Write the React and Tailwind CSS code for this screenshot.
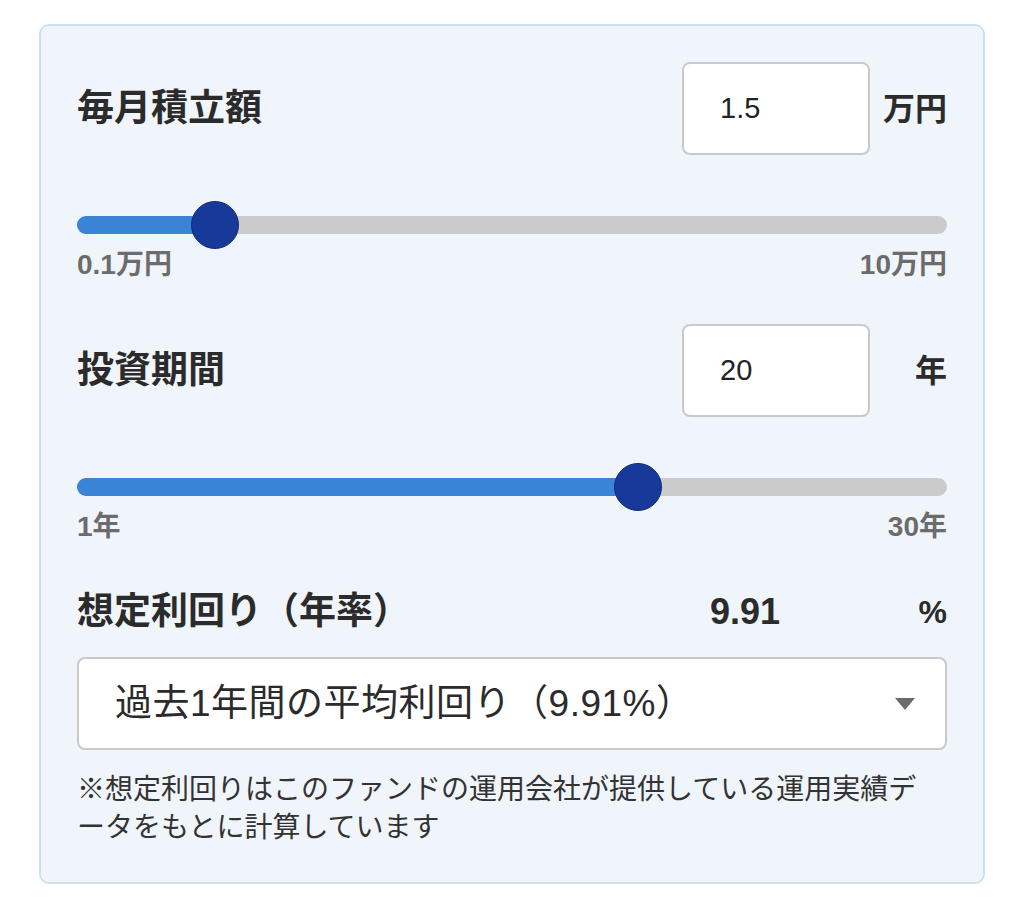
import React from "react";

const FONT = { fontFamily: '"Liberation Sans", "Noto Sans CJK JP", sans-serif' };

function Slider({ value, min, max }) {
  const p = (value - min) / (max - min);
  const center = `calc(22px + ${p} * (100% - 48px))`;
  return (
    <div className="relative h-[48px] w-full">
      <div className="absolute left-0 right-0 top-[15px] h-[18px] rounded-full bg-[#cbcbcb]" />
      <div
        className="absolute left-0 top-[15px] h-[18px] rounded-full bg-[#3a84d5]"
        style={{ width: center }}
      />
      <div
        className="absolute top-0 h-[48px] w-[48px] -translate-x-1/2 rounded-full border-[1.5px] border-[#0f2b7c] bg-[#173a9a]"
        style={{ left: center }}
      />
    </div>
  );
}

function InputRow({ title, value, unit }) {
  return (
    <div className="flex h-[93px] items-center">
      <div className="flex-1 text-[37px] font-bold text-[#2b2b2b]">{title}</div>
      <div className="flex h-[93px] w-[188px] items-center rounded-[8px] border-2 border-[#cacaca] bg-white pl-[36px] text-[29px] text-[#222]">
        {value}
      </div>
      <div className="ml-[12px] w-[65px] text-right text-[32px] font-bold text-[#2b2b2b]">{unit}</div>
    </div>
  );
}

function Labels({ left, right }) {
  return (
    <div className="flex h-[32px] items-center justify-between text-[28px] font-bold leading-none text-[#6c6c6c]">
      <span>{left}</span>
      <span>{right}</span>
    </div>
  );
}

export default function App() {
  return (
    <div className="min-h-[909px] bg-white pt-[24px] pl-[39px]" style={FONT}>
      <div className="h-[860px] w-[946px] rounded-[10px] border-2 border-[#cfdff0] bg-[#f0f5fb] px-[36px] pt-[36px]">
        <InputRow title="毎月積立額" value="1.5" unit="万円" />
        <div className="mt-[46px]">
          <Slider value={1.5} min={0.1} max={10} />
        </div>
        <Labels left="0.1万円" right="10万円" />

        <div className="mt-[43px]">
          <InputRow title="投資期間" value="20" unit="年" />
        </div>
        <div className="mt-[46px]">
          <Slider value={20} min={1} max={30} />
        </div>
        <Labels left="1年" right="30年" />

        <div className="mt-[47px] flex h-[44px] items-center">
          <div className="flex-1 text-[37px] font-bold text-[#2b2b2b]">想定利回り（年率）</div>
          <div className="w-[188px] pl-[28px] text-[36px] font-bold text-[#2b2b2b]">9.91</div>
          <div className="ml-[12px] w-[65px] text-right text-[32px] font-semibold text-[#2b2b2b]">%</div>
        </div>

        <div className="relative mt-[23px] flex h-[93px] items-center rounded-[8px] border-2 border-[#cacaca] bg-white pl-[36px] text-[37px] tracking-[0.5px] text-[#2b2b2b]">
          過去1年間の平均利回り（9.91%）
          <svg className="absolute right-[30px] top-[39px]" width="20" height="12" viewBox="0 0 20 12">
            <polygon points="0,0 20,0 10,12" fill="#6b6b6b" />
          </svg>
        </div>

        <p className="mt-[21px] text-[28px] leading-[38px] text-[#333]">
          <span className="whitespace-nowrap">※想定利回りはこのファンドの運用会社が提供している運用実績デ</span>
          <br />
          ータをもとに計算しています
        </p>
      </div>
    </div>
  );
}
